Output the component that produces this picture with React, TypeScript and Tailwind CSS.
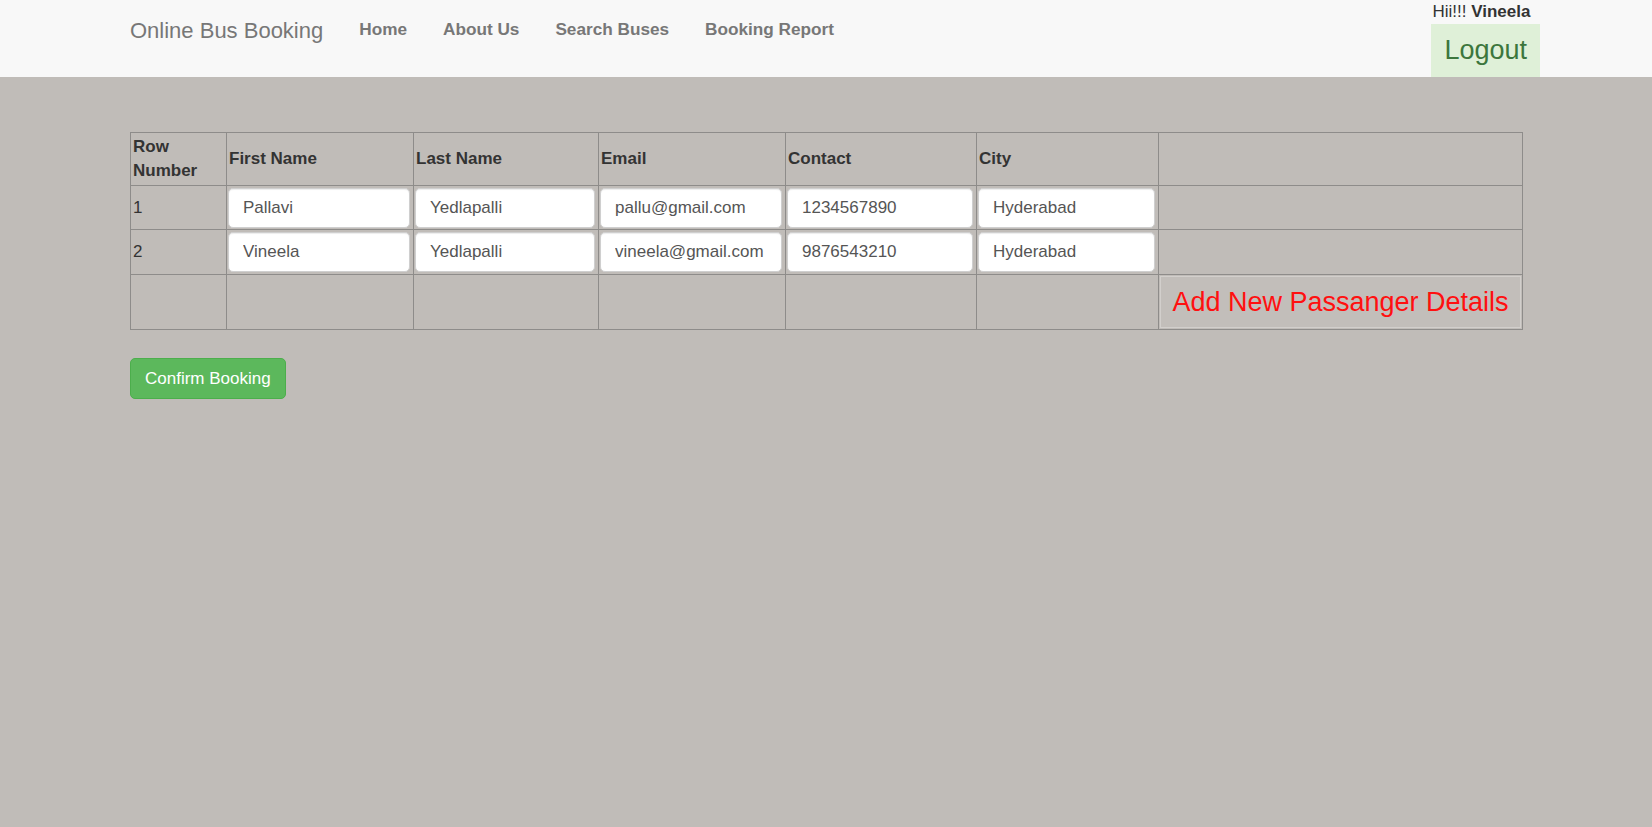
import React from "react";

const rows = [
  { n: "1", first: "Pallavi", last: "Yedlapalli", email: "pallu@gmail.com", contact: "1234567890", city: "Hyderabad" },
  { n: "2", first: "Vineela", last: "Yedlapalli", email: "vineela@gmail.com", contact: "9876543210", city: "Hyderabad" },
];

function Field({ value }: { value: string }) {
  return (
    <input
      readOnly
      value={value}
      className="block w-full h-[40px] px-[14px] bg-white border border-[#cfcfcf] rounded-[5px] text-[17px] text-[#555] outline-none shadow-[inset_0_1px_1px_rgba(0,0,0,0.075)] [font-family:'Liberation_Sans',Arial,sans-serif]"
    />
  );
}

export default function App() {
  const td = "border border-[#8e8c8a] pl-[1px] pr-[3px] py-[1px] align-middle";
  const th = "border border-[#8e8c8a] px-[2px] py-[2px] align-middle text-left font-bold leading-[24px]";
  return (
    <div className="min-h-[827px] bg-[#c0bcb8] text-[#333] text-[17px] [font-family:'Liberation_Sans',Arial,sans-serif]">
      <nav className="h-[77px] bg-[#f8f8f8]">
        <div className="flex items-start h-full pl-[130px] pr-[112px]">
          <div className="pt-[19px] pr-[18px] text-[22px] leading-[24px] text-[#777]">Online Bus Booking</div>
          <div className="flex">
            {["Home", "About Us", "Search Buses", "Booking Report"].map((l) => (
              <a key={l} className="px-[18px] pt-[17px] text-[17.2px] leading-[24px] font-bold text-[#777] cursor-pointer">
                {l}
              </a>
            ))}
          </div>
          <div className="ml-auto flex flex-col items-start h-full">
            <div className="leading-[24px] pl-[1px] text-[17px] text-[#333]">
              Hii!!! <b>Vineela</b>
            </div>
            <button className="h-[53px] px-[13px] bg-[#dff0d8] text-[#3c763d] text-[27px] leading-none">Logout</button>
          </div>
        </div>
      </nav>

      <div className="px-[130px]">
        <table className="mt-[55px] w-[1392px] table-fixed border-collapse border border-[#8e8c8a]">
          <colgroup>
            <col className="w-[96px]" />
            <col className="w-[187px]" />
            <col className="w-[185px]" />
            <col className="w-[187px]" />
            <col className="w-[191px]" />
            <col className="w-[182px]" />
            <col className="w-[364px]" />
          </colgroup>
          <thead>
            <tr className="h-[53px]">
              <th className={th}>Row Number</th>
              <th className={th}>First Name</th>
              <th className={th}>Last Name</th>
              <th className={th}>Email</th>
              <th className={th}>Contact</th>
              <th className={th}>City</th>
              <th className={th}></th>
            </tr>
          </thead>
          <tbody>
            {rows.map((r, i) => (
              <tr key={r.n} className={i === 0 ? "h-[44px]" : "h-[45px]"}>
                <td className={`${td} pl-[2px]`}>{r.n}</td>
                <td className={td}><Field value={r.first} /></td>
                <td className={td}><Field value={r.last} /></td>
                <td className={td}><Field value={r.email} /></td>
                <td className={td}><Field value={r.contact} /></td>
                <td className={td}><Field value={r.city} /></td>
                <td className={td}></td>
              </tr>
            ))}
            <tr className="h-[55px]">
              <td className={td}></td>
              <td className={td}></td>
              <td className={td}></td>
              <td className={td}></td>
              <td className={td}></td>
              <td className={td}></td>
              <td className="border border-[#8e8c8a] p-[1px] align-middle">
                <button className="w-full h-[52px] border border-[#d2cfcc] bg-[#c2beba] text-[#ff1010] text-[27px] leading-none text-center">
                  Add New Passanger Details
                </button>
              </td>
            </tr>
          </tbody>
        </table>

        <button className="mt-[28px] h-[41px] px-[14px] bg-[#5cb85c] border border-[#4cae4c] rounded-[5px] text-white text-[17px]">
          Confirm Booking
        </button>
      </div>
    </div>
  );
}
